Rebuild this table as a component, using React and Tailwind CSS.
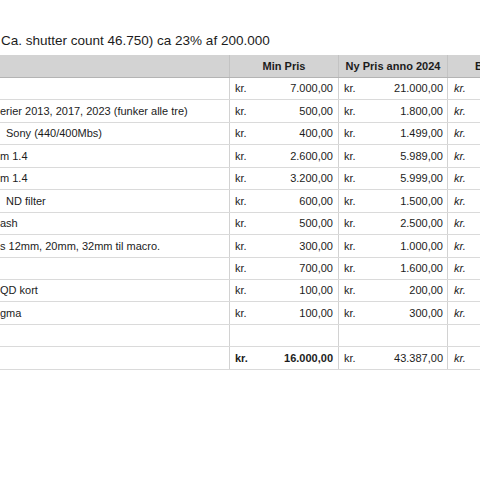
const rows = [
  { label: "", min: "7.000,00", ny: "21.000,00" },
  { label: "erier 2013, 2017, 2023 (funker alle tre)", min: "500,00", ny: "1.800,00" },
  { label: "Sony (440/400Mbs)", min: "400,00", ny: "1.499,00", indent: true },
  { label: "m 1.4", min: "2.600,00", ny: "5.989,00" },
  { label: "m 1.4", min: "3.200,00", ny: "5.999,00" },
  { label: "ND filter", min: "600,00", ny: "1.500,00", indent: true },
  { label: "ash", min: "500,00", ny: "2.500,00" },
  { label: "s 12mm, 20mm, 32mm til macro.", min: "300,00", ny: "1.000,00" },
  { label: "", min: "700,00", ny: "1.600,00" },
  { label: "QD kort", min: "100,00", ny: "200,00" },
  { label: "gma", min: "100,00", ny: "300,00" },
  { label: "", min: "", ny: "", empty: true },
];

const GRID = "grid grid-cols-[229px_109px_109px_1fr]";

function Row({ row, total }) {
  return (
    <div className={`${GRID} h-[22.45px] items-center border-b border-[#dadada]`}>
      <div className={`h-full flex items-center whitespace-nowrap overflow-hidden ${row.indent ? "pl-[6px]" : "pl-0"}`}>
        {row.label}
      </div>
      <div className={`h-full flex items-center justify-between border-l border-[#d2d2d2] pl-[5px] pr-[5px] ${total ? "font-bold" : ""}`}>
        {!row.empty && <span>kr.</span>}
        <span>{row.min}</span>
      </div>
      <div className="h-full flex items-center justify-between border-l border-[#d2d2d2] pl-[5px] pr-[4px]">
        {!row.empty && <span>kr.</span>}
        <span>{row.ny}</span>
      </div>
      <div className="h-full flex items-center border-l border-[#d2d2d2] pl-[6px]">
        {!row.empty && <span className="italic">kr.</span>}
      </div>
    </div>
  );
}

export default function App() {
  return (
    <div className="w-[480px] h-[480px] overflow-hidden bg-white text-[#1c1c1c] font-['Liberation_Sans',Arial,sans-serif]">
      <div className="pt-[32px] h-[55px] text-[13.5px] leading-[17px] pl-[1px] whitespace-nowrap">
        Ca. shutter count 46.750) ca 23% af 200.000
      </div>
      <div className="text-[11px]">
        <div className={`${GRID} h-[23px] items-center bg-[#d3d3d3] border-b border-[#b4b4b4] font-bold`}>
          <div className="h-full" />
          <div className="h-full flex items-center justify-center border-l border-[#c3c3c3]">Min Pris</div>
          <div className="h-full flex items-center justify-center border-l border-[#c3c3c3]">Ny Pris anno 2024</div>
          <div className="h-full flex items-center border-l border-[#c3c3c3] pl-[27px] whitespace-nowrap overflow-hidden">B</div>
        </div>
        {rows.map((r, i) => (
          <Row key={i} row={r} />
        ))}
        <Row row={{ label: "", min: "16.000,00", ny: "43.387,00" }} total />
      </div>
    </div>
  );
}
